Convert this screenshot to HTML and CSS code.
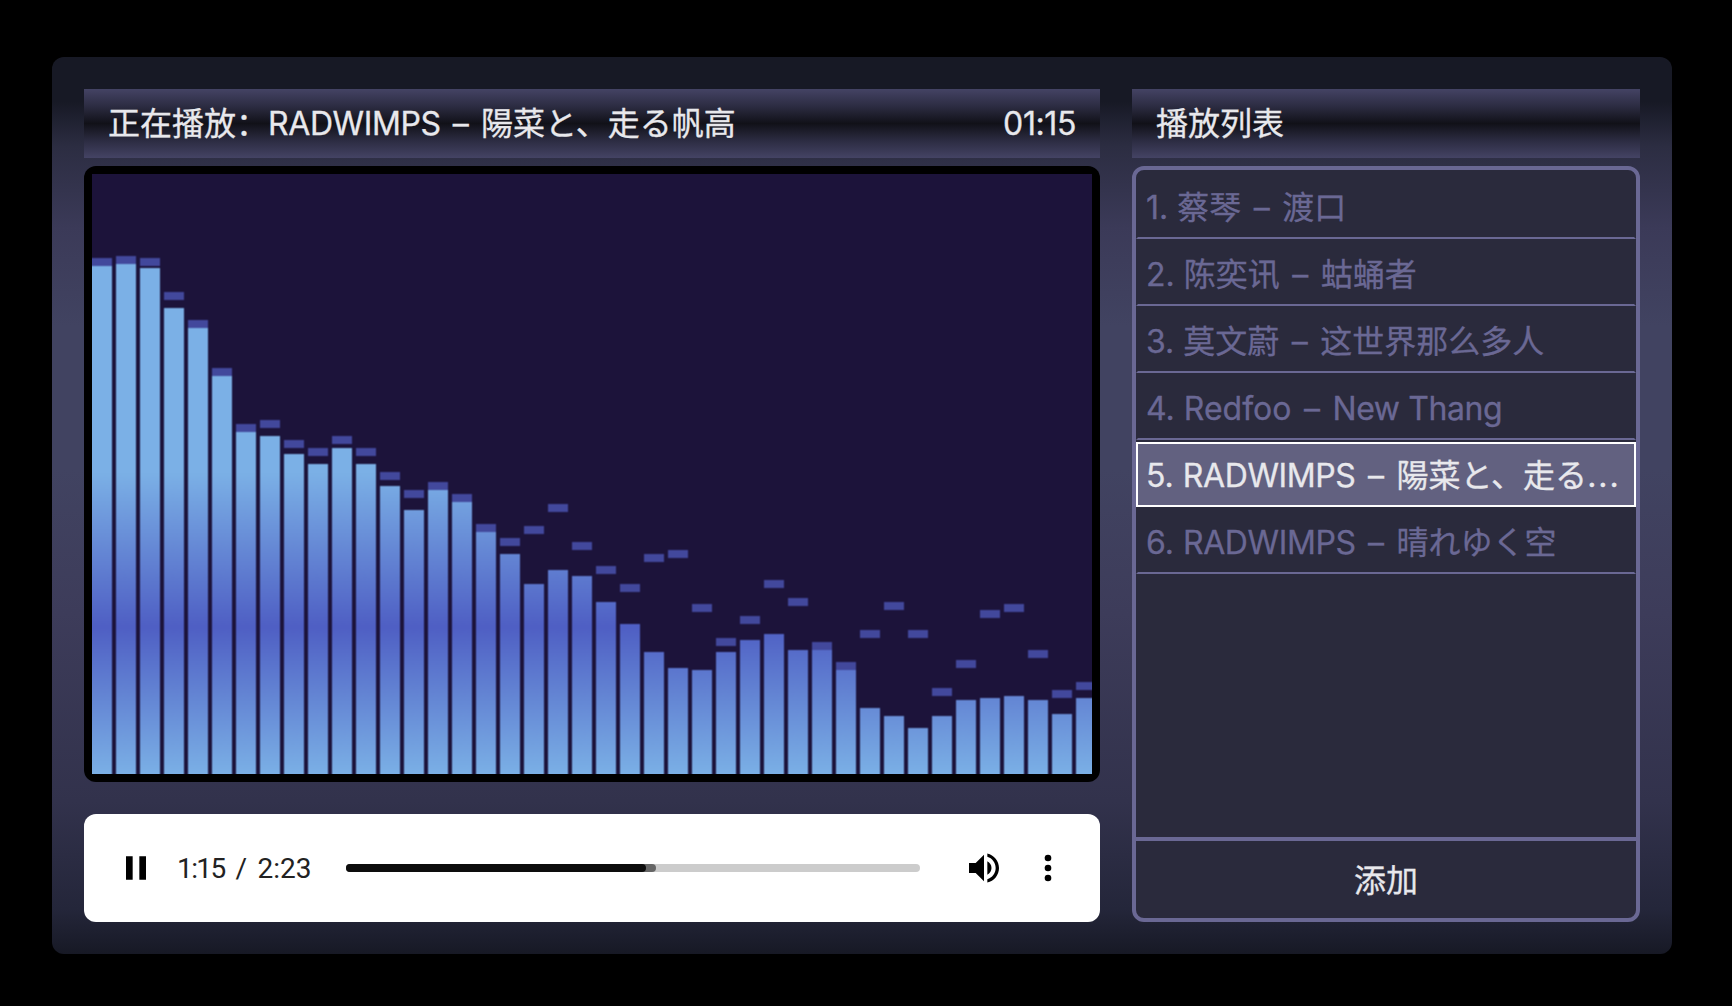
FILE: index.html
```html
<!DOCTYPE html>
<html lang="zh-CN">
<head>
<meta charset="utf-8">
<title>音乐播放器</title>
<link rel="stylesheet" href="styles.css">
</head>
<body>
<main class="player">
  <section class="stage">
    <header class="bar">
      <span class="title">正在播放：<span class="caps">RADWIMPS</span> <span class="dash">–</span> 陽菜と、走る帆高</span>
      <span class="clock">01:15</span>
    </header>
    <div class="screen"><canvas class="spectrum" id="spectrum" width="500" height="300"></canvas></div>
    <div class="audio">
      <div class="controls">
        <svg class="icon" viewBox="0 0 24 24"><path d="M6 19h4V5H6v14zm8-14v14h4V5h-4z"/></svg>
        <span class="time"><span class="elapsed">1:15</span> <span class="slash">/</span> 2:23</span>
        <div class="track"><div class="buffered"></div><div class="played"></div></div>
        <svg class="icon volume" viewBox="0 0 24 24"><path d="M3 9v6h4l5 5V4L7 9H3zm13.500 3c0-1.770-1.020-3.290-2.500-4.030v8.050c1.480-.730 2.500-2.250 2.500-4.020zM14 3.230v2.060c2.890.860 5 3.540 5 6.710s-2.110 5.850-5 6.710v2.060c4.010-.910 7-4.490 7-8.770s-2.990-7.860-7-8.770z"/></svg>
        <svg class="icon more" viewBox="0 0 24 24"><circle cx="12" cy="6" r="2"/><circle cx="12" cy="12" r="2"/><circle cx="12" cy="18" r="2"/></svg>
      </div>
    </div>
  </section>
  <aside class="playlist">
    <header class="bar"><span class="title">播放列表</span></header>
    <div class="box">
      <ul class="songs">
        <li class="song">1. 蔡琴 <span class="dash">–</span> 渡口</li>
        <li class="song">2. 陈奕讯 <span class="dash">–</span> 蛄蛹者</li>
        <li class="song">3. 莫文蔚 <span class="dash">–</span> 这世界那么多人</li>
        <li class="song">4. Redfoo <span class="dash">–</span> <span class="caps">New Thang</span></li>
        <li class="song active">5. <span class="caps">RADWIMPS</span> <span class="dash">–</span> 陽菜と、走る<span class="dots">...</span></li>
        <li class="song">6. <span class="caps">RADWIMPS</span> <span class="dash">–</span> 晴れゆく空</li>
      </ul>
      <button class="add">添加</button>
    </div>
  </aside>
</main>
<script src="spectrum.js"></script>
</body>
</html>
```
FILE: styles.css
```css
* { box-sizing: border-box; }
body {
  margin: 0;
  background: #000;
  color: #e8e8ec;
  font: 32px/45px Inter, "Noto Sans CJK SC", sans-serif;
  -webkit-text-stroke: 0.3px;
}
.player {
  display: grid;
  grid-template-columns: 1016px 508px;
  column-gap: 32px;
  width: 1620px;
  height: 897px;
  margin: 57px 0 0 52px;
  padding: 32px;
  border-radius: 12px;
  background: linear-gradient(#171925 0%, #171925 5%, #2c2d42 10%, #3b3a58 19%, #414361 30%, #414361 46%, #3d3c5a 62%, #32324c 83%, #24263a 95%, #171925 100%);
}
.stage, .playlist { display: flex; flex-direction: column; min-width: 0; }
.bar {
  display: flex;
  align-items: center;
  justify-content: space-between;
  height: 69px;
  margin-bottom: 8px;
  padding: 0 24px;
  background: linear-gradient(#444364, #2c2c42 25%, #111118 50%, #2c2c42 75%, #444364);
}
.title, .clock { white-space: pre; }
.clock { letter-spacing: -0.4px; }
.caps { letter-spacing: -0.4px; }
.dash { display: inline-block; padding: 0 3.200px; }
.song .dash { padding: 0 3.500px; }
.dots { letter-spacing: 2px; }
.screen {
  height: 616px;
  padding: 8px;
  border-radius: 12px;
  background: #000;
}
.spectrum {
  display: block;
  width: 1000px;
  height: 600px;
}
.audio {
  height: 108px;
  margin-top: 32px;
  border-radius: 12px;
  background: #fff;
}
.controls {
  display: flex;
  align-items: center;
  height: 108px;
  padding: 0 32px;
}
.icon { width: 40px; height: 40px; flex: none; }
.time {
  width: 142px;
  margin-left: 21px;
  padding-top: 1px;
  color: #222;
  font: 28px/32px Roboto, sans-serif;
  white-space: pre;
  -webkit-text-stroke: 0;
}
.elapsed { letter-spacing: -1.600px; }
.slash { padding: 0 3.500px 0 4px; }
.track {
  position: relative;
  width: 574px;
  height: 8px;
  margin-left: 27px;
  border-radius: 4px;
  background: #ccc;
}
.played, .buffered { position: absolute; left: 0; top: 0; height: 8px; border-radius: 4px; }
.played { width: 300px; background: #0d0d0d; }
.buffered { width: 310px; background: #666; }
.volume { margin-left: 44px; }
.more { margin-left: 24px; }
.box {
  display: flex;
  flex-direction: column;
  height: 756px;
  border: 4px solid #6a6894;
  border-radius: 12px;
  background: #2a2a3c;
  overflow: hidden;
}
.songs {
  flex: 1;
  margin: 0;
  padding: 2px 0 0;
  list-style: none;
}
.song {
  height: 65px;
  margin-top: 2px;
  padding: 9px 8px 7px;
  border: 2px solid transparent;
  border-bottom-color: #6a6894;
  color: #6a6894;
  white-space: nowrap;
  overflow: hidden;
}
.song.active { border-color: #fff; background: #626180; color: #e8e8ec; }
.add {
  height: 81px;
  padding: 1px 0 0;
  border: 0;
  border-top: 4px solid #6a6894;
  background: none;
  color: #e8e8ec;
  font: inherit;
}
```
FILE: spectrum.js
```js
// Bar height and cap offset from the floor, in canvas units.
const bars = [
  [254,258],[255,259],[253,258],[233,241],[223,227],[199,203],[171,175],[169,177],[160,167],[155,163],
  [163,169],[155,163],[144,151],[132,142],[142,146],[136,140],[121,125],[110,118],[95,124],[102,135],
  [99,116],[86,104],[75,95],[61,110],[53,112],[52,85],[61,68],[67,79],[70,97],[62,88],
  [62,66],[52,56],[33,72],[29,86],[23,72],[29,43],[37,57],[38,82],[39,85],[37,62],[30,42],[38,46]
];
const g = document.getElementById("spectrum").getContext("2d");
const fill = g.createLinearGradient(0, 0, 0, 300);
fill.addColorStop(0, "#7bb0e6");
fill.addColorStop(0.5, "#7bb0e6");
fill.addColorStop(0.755, "#4f5fc4");
fill.addColorStop(1, "#7bb0e6");
g.fillStyle = "#1c133a";
g.fillRect(0, 0, 500, 300);
bars.forEach(([h, cap], i) => {
  g.fillStyle = "#42489c";
  g.fillRect(i * 12, 300 - cap, 10, 4);
  g.fillStyle = fill;
  g.fillRect(i * 12, 300 - h, 10, h);
});
```
